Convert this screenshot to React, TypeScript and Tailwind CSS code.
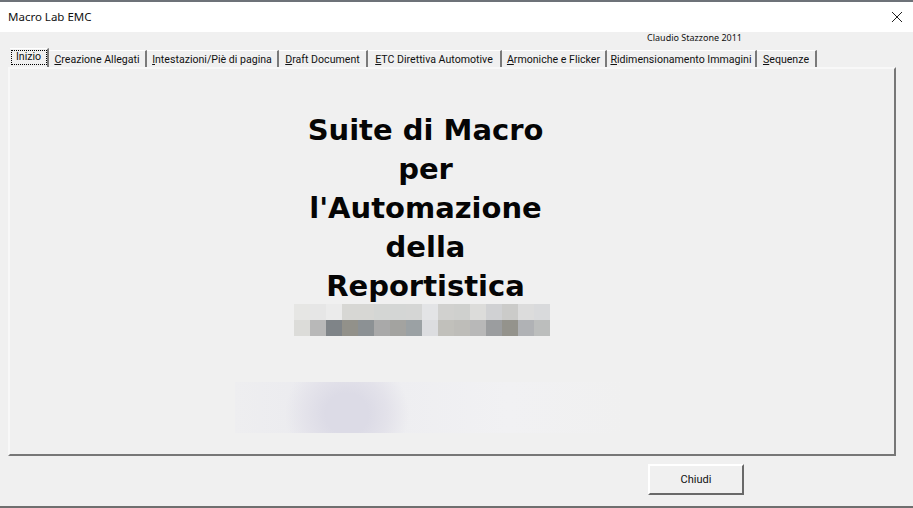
const tabs = [
  { label: 'Creazione Allegati', width: 'w-[98px]' },
  { label: 'Intestazioni/Piè di pagina', width: 'w-[132px]' },
  { label: 'Draft Document', width: 'w-[89px]' },
  { label: 'ETC Direttiva Automotive', width: 'w-[134px]' },
  { label: 'Armoniche e Flicker', width: 'w-[105px]' },
  { label: 'Ridimensionamento Immagini', width: 'w-[150px]' },
  { label: 'Sequenze', width: 'w-[60px]' },
];

const mosaicTop = [
  'bg-[#e6e6e4]', 'bg-[#e6e6e6]', 'bg-[#ebebeb]', 'bg-[#d7d7d4]',
  'bg-[#d7d7d4]', 'bg-[#d4d6d4]', 'bg-[#d4d6d5]', 'bg-[#d5d6d5]',
  'bg-[#e3e4e6]', 'bg-[#d1d1cf]', 'bg-[#cfd0ce]', 'bg-[#dcdcda]',
  'bg-[#d0d1d3]', 'bg-[#cbcbc9]', 'bg-[#dcdcdc]', 'bg-[#d9dadc]',
];

const mosaicBottom = [
  'bg-[#dcdcd9]', 'bg-[#b8b8b8]', 'bg-[#7f8488]', 'bg-[#92918a]',
  'bg-[#8c9194]', 'bg-[#a9a9a9]', 'bg-[#a3a3a0]', 'bg-[#9ba1a4]',
  'bg-[#dcdde0]', 'bg-[#c1c0bb]', 'bg-[#bebdb9]', 'bg-[#b8b8b8]',
  'bg-[#9b9d9f]', 'bg-[#94938c]', 'bg-[#b0b2b5]', 'bg-[#bcbebd]',
];

function Tab({ label, width }: { label: string; width: string }) {
  return (
    <div className={`${width} h-[17px] pt-px flex items-center justify-center border-r-2 border-r-[#7a7a7a] border-t border-t-white`}>
      <span className="whitespace-nowrap">
        <span className="underline">{label[0]}</span>
        {label.slice(1)}
      </span>
    </div>
  );
}

export default function App() {
  return (
    <div className="w-[913px] h-[508px] flex flex-col bg-white overflow-hidden font-['Roboto',sans-serif] text-[10.6px] text-[#111]">
      <div className="h-[2px] bg-[#6d7278]" />

      {/* title bar */}
      <div className="h-[30px] shrink-0 flex items-center justify-between pl-2 pr-[10px] bg-white">
        <span className="text-[11.5px] font-['Noto_Sans',sans-serif]">Macro Lab EMC</span>
        <svg width="12" height="12" viewBox="0 0 12 12" className="stroke-[#222]">
          <path d="M1 1 L11 11 M11 1 L1 11" fill="none" strokeWidth="1" />
        </svg>
      </div>

      {/* dialog body */}
      <div className="h-[476px] shrink-0 flex flex-col bg-[#f0f0f0] border-b-2 border-b-[#6f6f6f]">
        <div className="h-[11px] mb-[6px] flex items-center justify-end pr-[171px] text-[9px] font-['Noto_Sans',sans-serif]">
          Claudio Stazzone 2011
        </div>

        <div className="flex h-[18px] pl-[10px] items-end">
          <div className="w-[39px] h-[19px] pb-[2px] flex items-center justify-center border-r-2 border-r-[#7a7a7a] border-t border-t-white">
            <span className="w-[36px] h-[15px] text-center leading-[12px] border border-dotted border-black">
              Inizio
            </span>
          </div>
          {tabs.map((tab) => (
            <Tab key={tab.label} label={tab.label} width={tab.width} />
          ))}
        </div>

        <div className="ml-2 w-[888px] h-[389px] flex flex-col border-2 border-t-[#f8f8f8] border-l-[#f8f8f8] border-r-[#777] border-b-[#777]">
          <div className="flex flex-col items-center w-[831px] pt-[42px]">
            <h1 className="w-[300px] text-center font-['DejaVu_Sans',sans-serif] font-bold text-[29px] leading-[39px] text-[#050505]">
              Suite di Macro
              <br />
              per
              <br />
              l'Automazione
              <br />
              della
              <br />
              Reportistica
            </h1>
          </div>

          <div className="ml-[284px] -mt-[2px] flex">
            {mosaicTop.map((color, i) => (
              <div key={i} className={`w-4 h-4 ${color}`} />
            ))}
          </div>
          <div className="ml-[284px] flex">
            {mosaicBottom.map((color, i) => (
              <div key={i} className={`w-4 h-4 ${color}`} />
            ))}
          </div>

          <div className="ml-[225px] mt-[46px] w-[390px] h-[51px] bg-[radial-gradient(ellipse_62px_60px_at_112px_32px,#dcdbe6_35%,#e3e2ea_65%,transparent_100%),linear-gradient(90deg,#eeeef0_0%,#ebebef_20%,#eeeef1_42%,#f1f1f3_70%,#f0f0f0_100%)]" />
        </div>

        <div className="flex justify-end pr-[169px] pt-2">
          <button className="w-[96px] h-[31px] pt-[2px] bg-[#f0f0f0] border-2 border-t-white border-l-white border-r-[#696969] border-b-[#696969] text-[11px]">
            Chiudi
          </button>
        </div>
      </div>
    </div>
  );
}
